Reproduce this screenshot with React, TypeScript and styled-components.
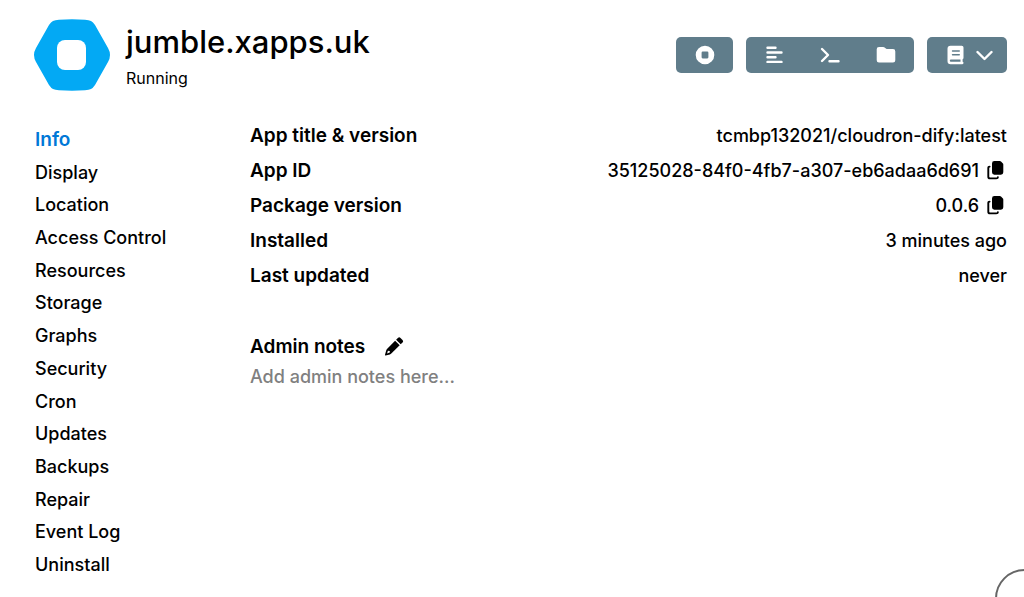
import React from "react";
import styled, { createGlobalStyle } from "styled-components";

const GlobalStyle = createGlobalStyle`
  *, *::before, *::after { box-sizing: border-box; }
  body {
    margin: 0;
    background: #fff;
    color: #000;
    font-family: Inter, "Liberation Sans", sans-serif;
    font-size: 18px;
    font-weight: 500;
    overflow-x: hidden;
  }
`;

const Page = styled.div`
  display: flex;
  flex-direction: column;
  min-height: 100vh;
  padding: 16px 17px 16px 33px;
`;

const Header = styled.header`
  display: flex;
  align-items: center;
  gap: 15px;
`;

const Logo = styled.svg`
  width: 78px;
  height: 78px;
  flex: none;
`;

const Heading = styled.div`
  flex: 1;
  min-width: 0;
`;

const Title = styled.h1`
  margin: 0;
  font-size: 31px;
  line-height: 44px;
  font-weight: 500;
`;

const Status = styled.p`
  margin: 2px 0 0;
  font-size: 16px;
  line-height: 24px;
  font-weight: 400;
`;

const Toolbar = styled.div`
  display: flex;
  gap: 13px;
`;

const ButtonGroup = styled.div`
  display: flex;
  border-radius: 5px;
  overflow: hidden;
`;

const ToolButton = styled.button<{ $width?: number }>`
  display: flex;
  align-items: center;
  justify-content: center;
  gap: 12px;
  width: ${(p) => p.$width ?? 56}px;
  height: 36px;
  padding: 0;
  border: 0;
  background: #607d8b;
  color: #fff;
  cursor: pointer;
`;

const MenuButton = styled(ToolButton)`
  padding-left: 6px;
`;

const Body = styled.div`
  display: flex;
  flex: 1;
  margin-top: 24px;
`;

const Nav = styled.nav`
  display: flex;
  flex-direction: column;
  justify-content: space-between;
  width: 217px;
  max-height: 480px;
  flex: none;
  padding: 6px 2px 0;
`;

const NavLink = styled.a<{ $active?: boolean }>`
  line-height: 32px;
  text-decoration: none;
  color: ${(p) => (p.$active ? "#0078d7" : "#000")};
  font-size: ${(p) => (p.$active ? 19 : 18)}px;
  font-weight: ${(p) => (p.$active ? 600 : 500)};
`;

const Content = styled.main`
  flex: 1;
  min-width: 0;
`;

const Details = styled.dl`
  margin: 0;
`;

const DetailRow = styled.div`
  display: flex;
  justify-content: space-between;
  line-height: 35px;
`;

const Term = styled.dt`
  font-size: 19px;
  font-weight: 600;
`;

const Value = styled.dd`
  display: flex;
  align-items: center;
  gap: 8px;
  margin: 0;
`;

const IconButton = styled.button`
  display: flex;
  padding: 0;
  border: 0;
  background: none;
  color: inherit;
  cursor: pointer;
`;

const CopyButton = styled(IconButton)`
  padding-right: 3px;
`;

const NotesHeader = styled.div`
  display: flex;
  align-items: center;
  gap: 19px;
  margin-top: 36px;
`;

const NotesTitle = styled.h2`
  margin: 0;
  font-size: 19px;
  line-height: 35px;
  font-weight: 600;
`;

const Placeholder = styled.p`
  margin: 0;
  line-height: 26px;
  color: #808080;
`;

const CornerButton = styled.button`
  position: fixed;
  right: -30px;
  bottom: -31px;
  width: 59px;
  height: 59px;
  border: 2px solid #666;
  border-radius: 50%;
  background: #fff;
`;

const StopIcon = () => (
  <svg width="20" height="20" viewBox="0 0 20 20" aria-hidden="true">
    <path fill="currentColor" fillRule="evenodd" d="M10 .7a9.3 9.3 0 1 1 0 18.6a9.3 9.3 0 0 1 0-18.6ZM7.7 6.6q-1.1 0-1.1 1.1v4.6q0 1.1 1.1 1.1h4.6q1.1 0 1.1-1.1V7.7q0-1.1-1.1-1.1Z" />
  </svg>
);

const LogsIcon = () => (
  <svg width="18" height="18" viewBox="0 0 18 18" fill="none" stroke="currentColor" strokeWidth="2.4" strokeLinecap="round" aria-hidden="true">
    <path d="M2.500 1.700H10.500M2.500 6.500H16.500M2.500 11.200H10.500M2.500 15.900H16.500" />
  </svg>
);

const TerminalIcon = () => (
  <svg width="20" height="18" viewBox="0 0 20 18" fill="none" stroke="currentColor" strokeWidth="2.4" strokeLinecap="round" strokeLinejoin="round" aria-hidden="true">
    <path d="M2 3L8 9L2 15M9.500 15.300H18.500" />
  </svg>
);

const FolderIcon = () => (
  <svg width="20" height="18" viewBox="0 0 20 18" fill="currentColor" aria-hidden="true">
    <path d="M3 1H7.200q.8 0 1.400.5L10.200 2.700q.5.400 1.200.4H17q2.300 0 2.300 2.300v8.800q0 2.400-2.300 2.400H3Q.7 16.600.7 14.200V3.300Q.7 1 3 1Z" />
  </svg>
);

const BookIcon = () => (
  <svg width="17" height="20" viewBox="0 0 17 20" fill="currentColor" aria-hidden="true">
    <path fillRule="evenodd" d="M3.500 .8H14.800q1.700 0 1.700 1.700V12.800q0 1-.9 1.500v2.500q.9.100.9 1.200t-1.100 1.200H3.700Q.5 19.200.5 16V3.800Q.5.800 3.500.8ZM5.500 5.200q-.7 0-.7.800t.7.800H12.200q.8 0 .8-.8t-.8-.8ZM5.500 9q-.7 0-.7.800t.7.800H12.200q.8 0 .8-.8t-.8-.8ZM3.900 14.600q-1.100 0-1.100 1.100t1.100 1.100H13.500V14.600Z" />
  </svg>
);

const ChevronIcon = () => (
  <svg width="17" height="12" viewBox="0 0 17 12" fill="none" stroke="currentColor" strokeWidth="2.400" strokeLinecap="round" strokeLinejoin="round" aria-hidden="true">
    <path d="M1.500 3L8.500 10L15.500 3" />
  </svg>
);

const CopyIcon = () => (
  <svg width="17" height="20" viewBox="0 0 17 20" aria-hidden="true">
    <path fill="currentColor" d="M7.400 0H12.800q.7 0 1.200.5L15.700 2.200q.6.500.6 1.300V11.300q0 2.400-2.400 2.400H7.400Q5 13.700 5 11.300V2.400Q5 0 7.400 0Z" />
    <path fill="none" stroke="currentColor" strokeWidth="1.900" strokeLinecap="round" d="M2.600 5.600q-1.300 0-1.300 1.400V15.700q0 1.700 1.700 1.700H9.200q1.700 0 1.700-1.200" />
  </svg>
);

const PencilIcon = () => (
  <svg width="20" height="20" viewBox="0 0 20 20" fill="currentColor" aria-hidden="true">
    <path d="M13.900 .9q1.300-1.200 2.600 0L18.500 2.900q1.200 1.300 0 2.600L16.700 7.300L12.100 2.700Z" />
    <path fillRule="evenodd" d="M11.100 3.700L15.700 8.300L7.300 16.600q-.6.600-1.400.8L1.600 18.500q-.8.100-.6-.7L2.200 13.500q.2-.8.800-1.400ZM3.900 13.700L3.100 16.400L5.800 15.600V13.900Z" />
  </svg>
);

const sections = [
  "Info", "Display", "Location", "Access Control", "Resources", "Storage", "Graphs",
  "Security", "Cron", "Updates", "Backups", "Repair", "Event Log", "Uninstall",
];

const details = [
  { label: "App title & version", value: "tcmbp132021/cloudron-dify:latest" },
  { label: "App ID", value: "35125028-84f0-4fb7-a307-eb6adaa6d691", copy: true },
  { label: "Package version", value: "0.0.6", copy: true },
  { label: "Installed", value: "3 minutes ago" },
  { label: "Last updated", value: "never" },
];

export default function App() {
  return (
    <Page>
      <GlobalStyle />
      <Header>
        <Logo viewBox="0 0 78 78" aria-hidden="true">
          <path fill="#03a9f4" d="M20 5Q22 4 26 3.700Q39 3 52 3.700Q56 4 58 5Q60 6 62 9L75 32Q79 39 75 46L62 69Q60 72 58 73Q56 74 52 74.300Q39 75 26 74.300Q22 74 20 73Q18 72 16 69L3 46Q-1 39 3 32L16 9Q18 6 20 5Z" />
          <rect x="24" y="24" width="29" height="30" rx="8" fill="#fff" />
        </Logo>
        <Heading>
          <Title>jumble.xapps.uk</Title>
          <Status>Running</Status>
        </Heading>
        <Toolbar>
          <ButtonGroup>
            <ToolButton $width={57} aria-label="Stop"><StopIcon /></ToolButton>
          </ButtonGroup>
          <ButtonGroup>
            <ToolButton aria-label="Logs"><LogsIcon /></ToolButton>
            <ToolButton aria-label="Terminal"><TerminalIcon /></ToolButton>
            <ToolButton aria-label="File manager"><FolderIcon /></ToolButton>
          </ButtonGroup>
          <ButtonGroup>
            <MenuButton $width={80} aria-label="Documentation"><BookIcon /><ChevronIcon /></MenuButton>
          </ButtonGroup>
        </Toolbar>
      </Header>
      <Body>
        <Nav>
          {sections.map((name, i) => (
            <NavLink key={name} href="#" $active={i === 0}>{name}</NavLink>
          ))}
        </Nav>
        <Content>
          <Details>
            {details.map((d) => (
              <DetailRow key={d.label}>
                <Term>{d.label}</Term>
                <Value>
                  {d.value}
                  {d.copy && <CopyButton aria-label={`Copy ${d.label}`}><CopyIcon /></CopyButton>}
                </Value>
              </DetailRow>
            ))}
          </Details>
          <NotesHeader>
            <NotesTitle>Admin notes</NotesTitle>
            <IconButton aria-label="Edit admin notes"><PencilIcon /></IconButton>
          </NotesHeader>
          <Placeholder>Add admin notes here...</Placeholder>
        </Content>
      </Body>
      <CornerButton aria-label="Help" />
    </Page>
  );
}
